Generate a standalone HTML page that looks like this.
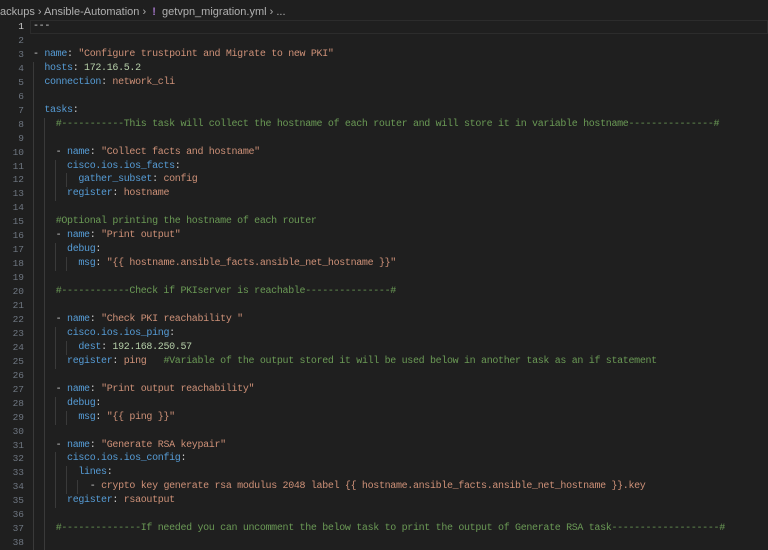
<!DOCTYPE html>
<html><head><style>
body{margin:0;width:768px;height:550px;background:#1f1f1f;overflow:hidden;position:relative;font-family:"Liberation Mono",monospace;}
.bc{position:absolute;top:4px;left:0;height:17px;width:768px;font:11px "Liberation Sans",sans-serif;color:#b0b0b0;line-height:17px;white-space:pre}
.cur{position:absolute;left:30px;top:20px;width:738px;height:14px;border:1px solid #2c2c2c;box-sizing:border-box}
.ln{position:absolute;left:0;width:24px;text-align:right;font-size:9.5px;color:#6e7681;line-height:14px}
.c{position:absolute;left:33px;font-size:10px;letter-spacing:-0.33px;line-height:14px;white-space:pre;color:#cccccc}
.k{color:#569cd6}.s{color:#ce9178}.n{color:#b5cea8}.m{color:#6a9955}.p{color:#d4d4d4}
.g{position:absolute;width:1px;background:#3a3a3a}
</style></head><body>
<div class="bc">ackups &#x203A; Ansible-Automation &#x203A;  <span style="color:#a074c4;font-weight:bold">!</span>  getvpn_migration.yml &#x203A; ...</div>
<div class="cur"></div>
<div id="code"></div>
<script>
var L=[
'<span class="p">---</span>',
'',
'<span class="p">- </span><span class="k">name</span>: <span class="s">"Configure trustpoint and Migrate to new PKI"</span>',
'  <span class="k">hosts</span>: <span class="n">172.16.5.2</span>',
'  <span class="k">connection</span>: <span class="s">network_cli</span>',
'',
'  <span class="k">tasks</span>:',
'    <span class="m">#-----------This task will collect the hostname of each router and will store it in variable hostname---------------#</span>',
'',
'    - <span class="k">name</span>: <span class="s">"Collect facts and hostname"</span>',
'      <span class="k">cisco.ios.ios_facts</span>:',
'        <span class="k">gather_subset</span>: <span class="s">config</span>',
'      <span class="k">register</span>: <span class="s">hostname</span>',
'',
'    <span class="m">#Optional printing the hostname of each router</span>',
'    - <span class="k">name</span>: <span class="s">"Print output"</span>',
'      <span class="k">debug</span>:',
'        <span class="k">msg</span>: <span class="s">"{{ hostname.ansible_facts.ansible_net_hostname }}"</span>',
'',
'    <span class="m">#------------Check if PKIserver is reachable---------------#</span>',
'',
'    - <span class="k">name</span>: <span class="s">"Check PKI reachability "</span>',
'      <span class="k">cisco.ios.ios_ping</span>:',
'        <span class="k">dest</span>: <span class="n">192.168.250.57</span>',
'      <span class="k">register</span>: <span class="s">ping</span>   <span class="m">#Variable of the output stored it will be used below in another task as an if statement</span>',
'',
'    - <span class="k">name</span>: <span class="s">"Print output reachability"</span>',
'      <span class="k">debug</span>:',
'        <span class="k">msg</span>: <span class="s">"{{ ping }}"</span>',
'',
'    - <span class="k">name</span>: <span class="s">"Generate RSA keypair"</span>',
'      <span class="k">cisco.ios.ios_config</span>:',
'        <span class="k">lines</span>:',
'          - <span class="s">crypto key generate rsa modulus 2048 label {{ hostname.ansible_facts.ansible_net_hostname }}.key</span>',
'      <span class="k">register</span>: <span class="s">rsaoutput</span>',
'',
'    <span class="m">#--------------If needed you can uncomment the below task to print the output of Generate RSA task-------------------#</span>',
''];
var h='';
function ly(i){return 20+(i-1)*13.95;}
for(var i=0;i<L.length;i++){var t=ly(i+1);
h+='<div class="ln" style="top:'+t+'px;'+(i==0?'color:#cccccc':'')+'">'+(i+1)+'</div>';
h+='<div class="c" style="top:'+t+'px">'+L[i]+'</div>';}
var G=[[33,4,38],[44,8,38],[55,11,13],[66,12,12],[55,17,18],[66,18,18],[55,23,25],[66,24,24],[55,28,29],[66,29,29],[55,32,35],[66,33,34],[77,34,34]];
G.forEach(function(g){h+='<div class="g" style="left:'+g[0]+'px;top:'+ly(g[1])+'px;height:'+((g[2]-g[1]+1)*13.95)+'px"></div>';});
document.getElementById('code').innerHTML=h;
</script>
</body></html>
